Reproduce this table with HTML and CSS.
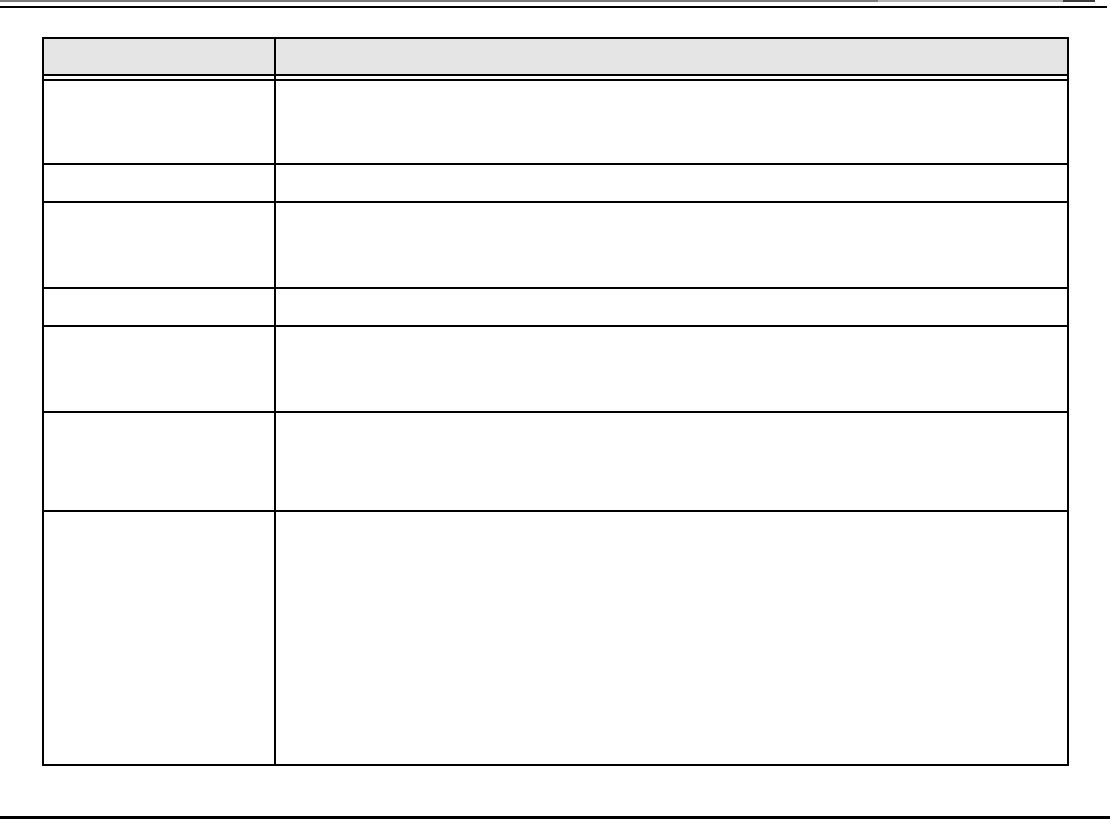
FILE: index.html
```html
<!DOCTYPE html>
<html lang="en">
<head>
<meta charset="utf-8">
<title>Table</title>
<link rel="stylesheet" href="styles.css">
</head>
<body>
<div class="page">
  <div class="topband"></div>
  <div class="rule-top"></div>
  <div class="tbl">
    <div class="row head"><div class="cell"></div><div class="cell"></div></div>
    <div class="row gap"><div class="cell"></div><div class="cell"></div></div>
    <div class="row first h82"><div class="cell"></div><div class="cell"></div></div>
    <div class="row h36"><div class="cell"></div><div class="cell"></div></div>
    <div class="row h84"><div class="cell"></div><div class="cell"></div></div>
    <div class="row h36"><div class="cell"></div><div class="cell"></div></div>
    <div class="row h84"><div class="cell"></div><div class="cell"></div></div>
    <div class="row h97"><div class="cell"></div><div class="cell"></div></div>
    <div class="row h252"><div class="cell"></div><div class="cell"></div></div>
  </div>
  <div class="rule-bottom"></div>
</div>
</body>
</html>
```
FILE: styles.css
```css
html, body {
  margin: 0;
  padding: 0;
  background: #fff;
  font-family: "Liberation Sans", Arial, sans-serif;
}

.page {
  width: 1110px;
  height: 819px;
  display: flex;
  flex-direction: column;
  overflow: hidden;
}

.topband {
  height: 2px;
  background: linear-gradient(to right,
    #7a7a7a 0px, #7a7a7a 878px,
    #b4b4b4 878px, #b4b4b4 1063px,
    #3c3c3c 1063px, #3c3c3c 1095px,
    #ffffff 1095px);
}

.rule-top {
  margin-top: 4px;
  height: 2px;
  width: 1107px;
  background: #000;
}

.tbl {
  margin-top: 29px;
  margin-left: 42px;
  width: 1023px;
  border: 2px solid #000;
  display: flex;
  flex-direction: column;
}

.row {
  display: grid;
  grid-template-columns: 230px 1fr;
}

.row .cell + .cell {
  border-left: 2px solid #000;
}

.head {
  height: 35px;
  border-bottom: 2px solid #000;
}

.head .cell {
  background: #e5e5e5;
}

.gap {
  height: 3px;
}

.row.first,
.row.h36,
.row.h84,
.row.h97,
.row.h252 {
  border-top: 2px solid #000;
}

.h82 { height: 82px; }
.h36 { height: 36px; }
.h84 { height: 84px; }
.h97 { height: 97px; }
.h252 { height: 252px; }

.rule-bottom {
  margin-top: auto;
  margin-bottom: 0;
  height: 3px;
  background: #000;
}
```
